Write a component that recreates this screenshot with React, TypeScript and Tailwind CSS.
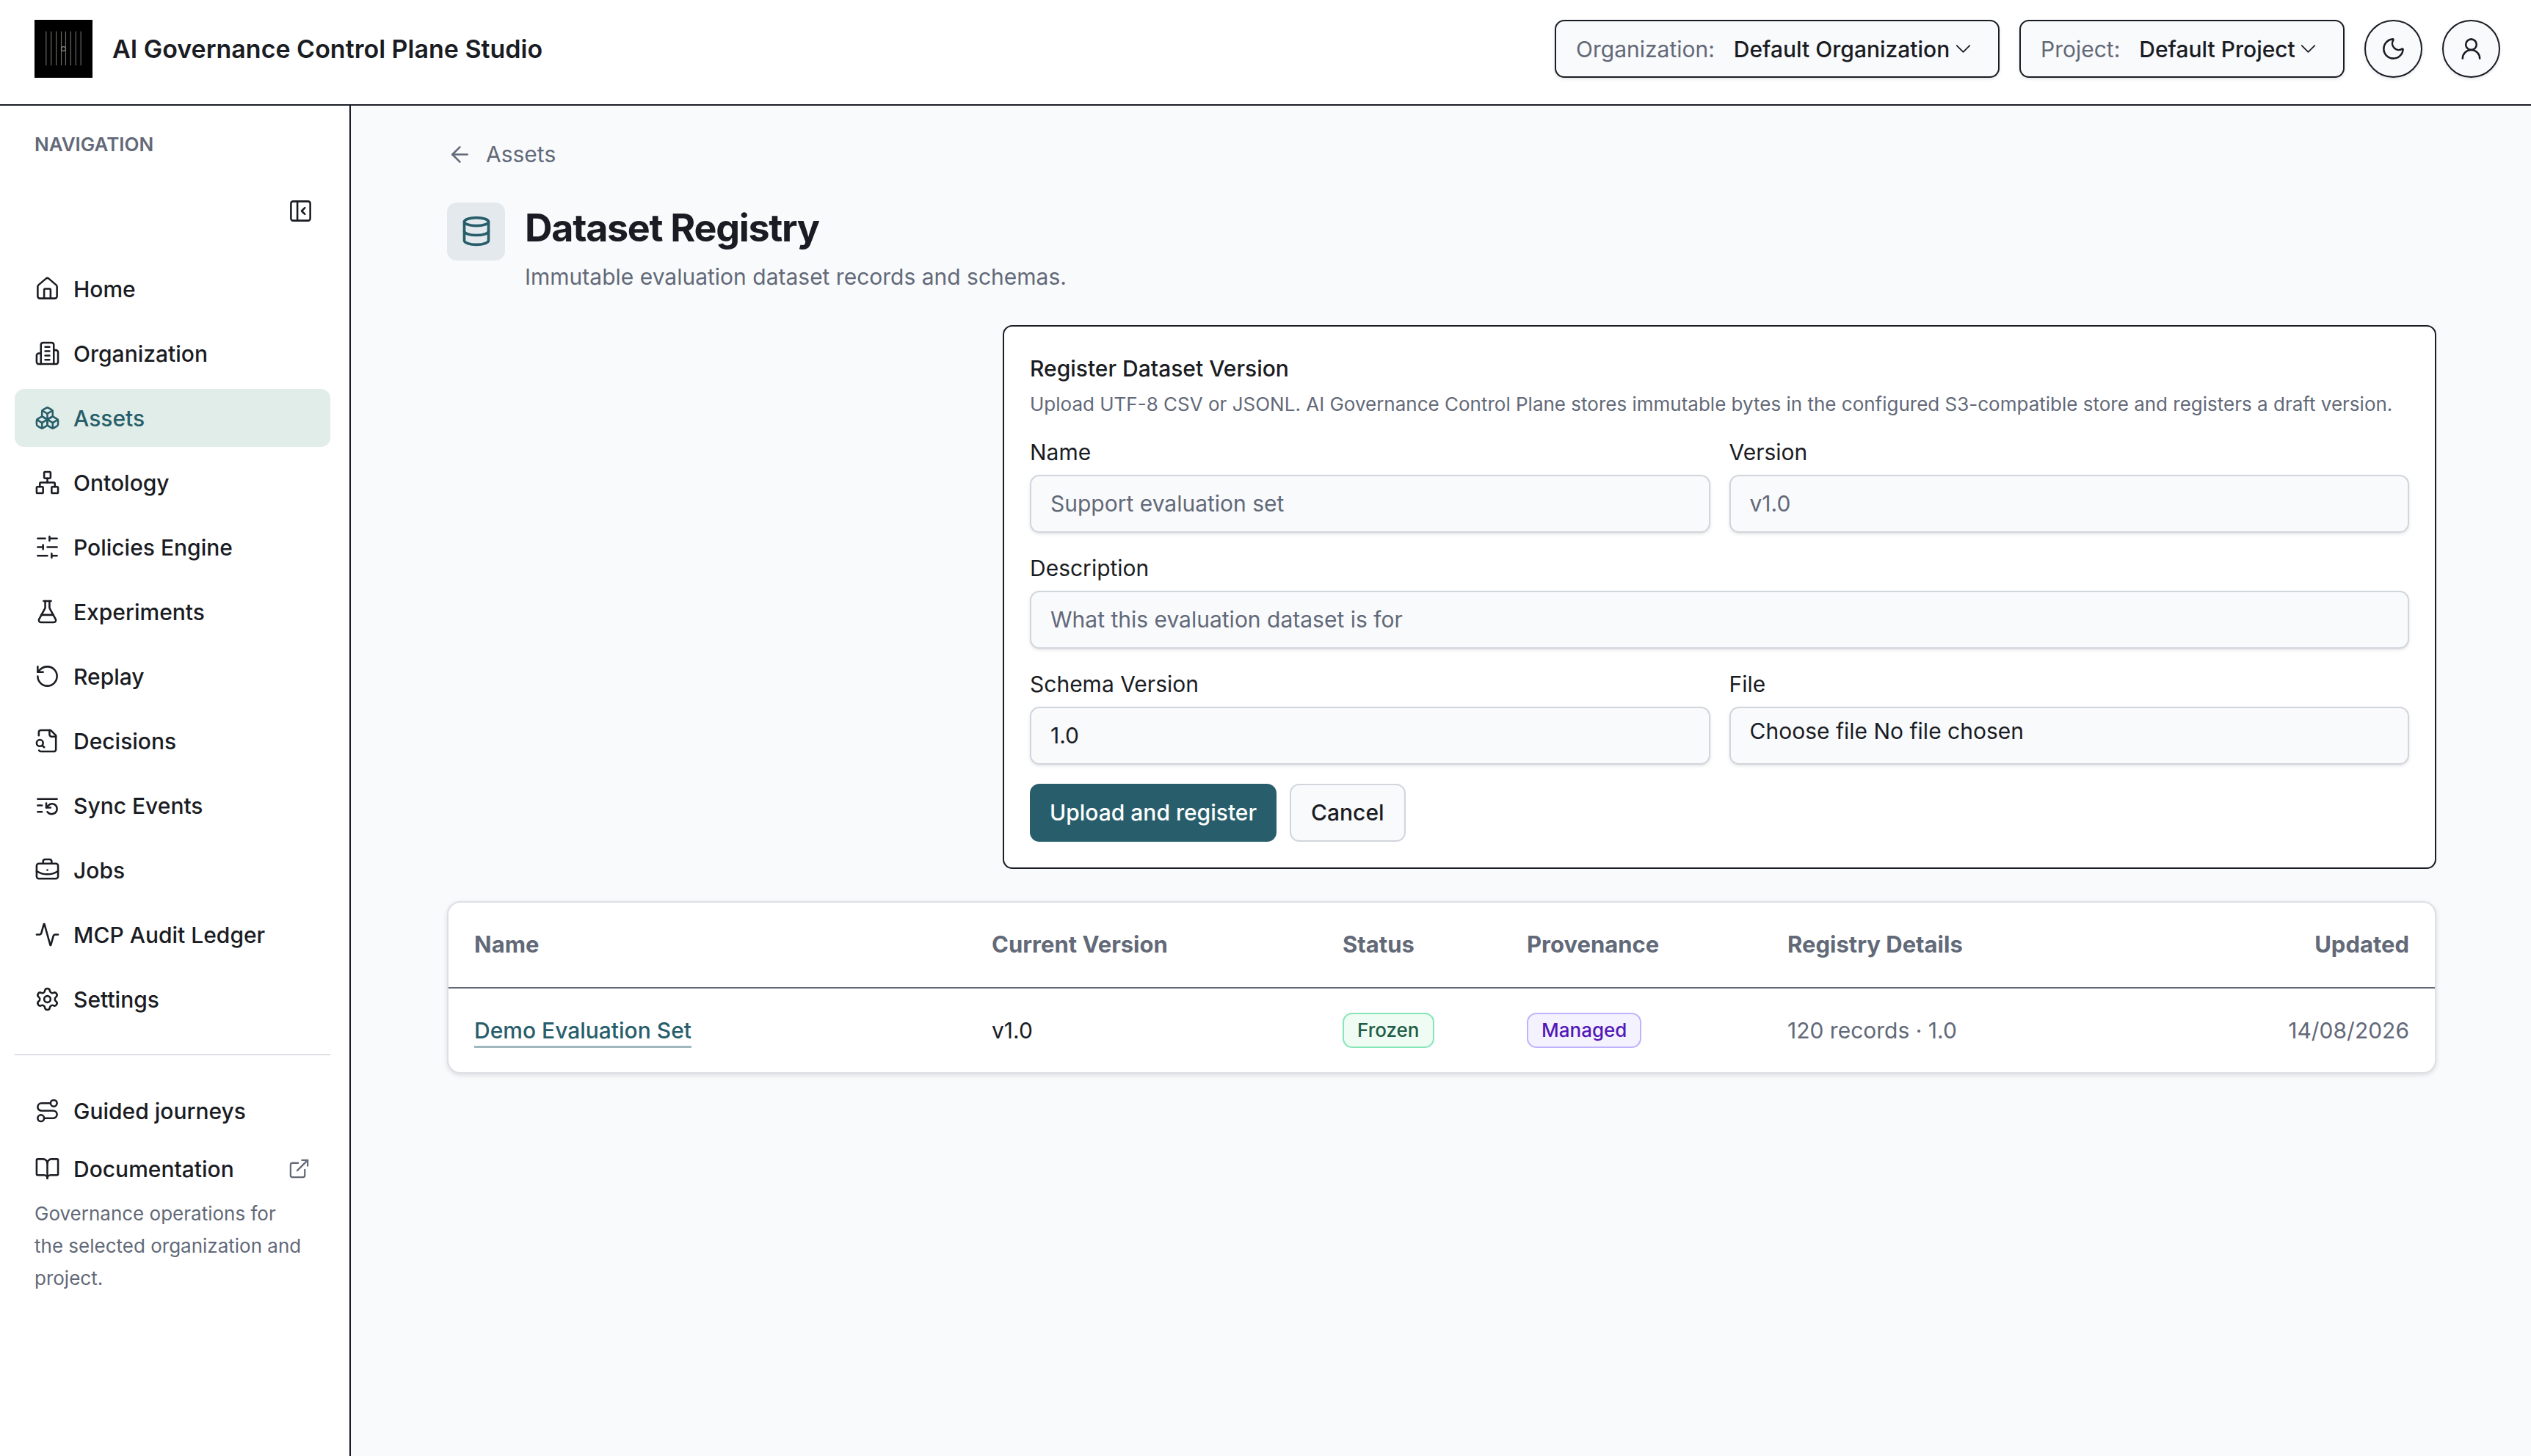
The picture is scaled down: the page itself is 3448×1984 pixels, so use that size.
import type React from "react"
import { useState } from "react"
import {
  Activity,
  ArrowLeft,
  BookOpen,
  Boxes,
  BriefcaseBusiness,
  ChevronDown,
  Database,
  ExternalLink,
  FlaskConical,
  House,
  Moon,
  Network,
  PanelLeftClose,
  RotateCcw,
  Route,
  Settings,
  UserRound,
} from "lucide-react"
import { clsx } from "clsx"

type IconType = React.ComponentType<{ className?: string; strokeWidth?: number }>

interface NavItem {
  label: string
  icon: IconType
  active?: boolean
}

interface Dataset {
  name: string
  version: string
  status: string
  provenance: string
  details: string
  updated: string
}

function outlineIcon(children: React.ReactNode): IconType {
  return function Icon({ className, strokeWidth = 2 }) {
    return (
      <svg
        className={className}
        viewBox="0 0 24 24"
        fill="none"
        stroke="currentColor"
        strokeWidth={strokeWidth}
        strokeLinecap="round"
        strokeLinejoin="round"
        aria-hidden="true"
      >
        {children}
      </svg>
    )
  }
}

const BuildingIcon = outlineIcon(
  <>
    <path d="M6 22V4a2 2 0 0 1 2-2h8a2 2 0 0 1 2 2v18Z" />
    <path d="M6 12H4a2 2 0 0 0-2 2v6a2 2 0 0 0 2 2h2" />
    <path d="M18 9h2a2 2 0 0 1 2 2v9a2 2 0 0 1-2 2h-2" />
    <path d="M10 6h4M10 10h4M10 14h4M10 18h4" />
  </>,
)

const SlidersIcon = outlineIcon(
  <path d="M21 4h-7M10 4H3M21 12h-9M8 12H3M21 20h-5M12 20H3M14 2v4M8 10v4M16 18v4" />,
)

const FileSearchIcon = outlineIcon(
  <>
    <path d="M14 2v4a2 2 0 0 0 2 2h4" />
    <path d="M4.268 21a2 2 0 0 0 1.727 1H18a2 2 0 0 0 2-2V7l-5-5H6a2 2 0 0 0-2 2v3" />
    <path d="m9 18-1.5-1.5" />
    <circle cx="5" cy="14" r="3" />
  </>,
)

const ListRestartIcon = outlineIcon(
  <>
    <path d="M21 6H3M7 12H3M7 18H3" />
    <path d="M12 18a5 5 0 0 0 9-3 4.5 4.5 0 0 0-4.5-4.5c-1.33 0-2.54.54-3.41 1.41L11 14" />
    <path d="M11 10v4h4" />
  </>,
)

const navItems: NavItem[] = [
  { label: "Home", icon: House },
  { label: "Organization", icon: BuildingIcon },
  { label: "Assets", icon: Boxes, active: true },
  { label: "Ontology", icon: Network },
  { label: "Policies Engine", icon: SlidersIcon },
  { label: "Experiments", icon: FlaskConical },
  { label: "Replay", icon: RotateCcw },
  { label: "Decisions", icon: FileSearchIcon },
  { label: "Sync Events", icon: ListRestartIcon },
  { label: "Jobs", icon: BriefcaseBusiness },
  { label: "MCP Audit Ledger", icon: Activity },
  { label: "Settings", icon: Settings },
]

const datasets: Dataset[] = [
  {
    name: "Demo Evaluation Set",
    version: "v1.0",
    status: "Frozen",
    provenance: "Managed",
    details: "120 records · 1.0",
    updated: "14/08/2026",
  },
]

function Logo() {
  const bars = [16, 23, 30, 37, 43, 50, 57, 64]
  return (
    <svg className="size-[79px] shrink-0" viewBox="0 0 80 80" aria-hidden="true">
      <rect width="80" height="80" fill="#000" />
      {bars.map((x) => (
        <path key={x} d={`M${x} 16v47`} stroke="#6b6a68" strokeWidth="1.2" />
      ))}
      <circle cx="40" cy="40" r="3" fill="#000" stroke="#93897a" strokeWidth="1.2" />
    </svg>
  )
}

function ScopeSelect({ id, label, value, className }: { id: string; label: string; value: string; className?: string }) {
  return (
    <div
      className={clsx(
        "flex h-[79px] items-center rounded-[13px] border-2 border-[#1a1d24] bg-[#f9fafc] pl-[27px] shadow-[0_2px_4px_rgba(0,0,0,0.1)]",
        className,
      )}
    >
      <label htmlFor={id} className="mr-[26px] text-[#626978]">
        {label}
      </label>
      <select id={id} className="appearance-none bg-transparent font-medium">
        <option>{value}</option>
      </select>
      <ChevronDown className="size-[35px]" strokeWidth={1.25} />
    </div>
  )
}

function RoundButton({ label, icon: Icon }: { label: string; icon: IconType }) {
  return (
    <button
      type="button"
      aria-label={label}
      className="flex size-[79px] items-center justify-center rounded-full border-2 border-[#1a1d24] bg-[#f9fafc] shadow-[0_2px_4px_rgba(0,0,0,0.1)]"
    >
      <Icon className="size-[35px]" strokeWidth={1.75} />
    </button>
  )
}

function Header() {
  return (
    <header className="flex items-center justify-between border-b-2 border-[#1a1d24] bg-white pt-[27px] pr-[42px] pb-[36px] pl-[47px]">
      <div className="flex items-center gap-[27px]">
        <Logo />
        <span className="text-[34px] leading-[44px] font-semibold">AI Governance Control Plane Studio</span>
      </div>
      <div className="flex items-center gap-[27px]">
        <ScopeSelect id="organization" label="Organization:" value="Default Organization" className="w-[606px]" />
        <ScopeSelect id="project" label="Project:" value="Default Project" className="w-[443px]" />
        <RoundButton label="Toggle theme" icon={Moon} />
        <RoundButton label="Account" icon={UserRound} />
      </div>
    </header>
  )
}

function NavLink({ item, children }: { item: NavItem; children?: React.ReactNode }) {
  const Icon = item.icon
  return (
    <a
      href="#"
      aria-current={item.active ? "page" : undefined}
      className={clsx(
        "flex h-[79px] items-center gap-[18px] rounded-[13px] px-[27px] font-medium",
        item.active && "bg-[#e0ede8] text-[#285e6b]",
      )}
    >
      <Icon className="size-[35px] shrink-0" strokeWidth={1.75} />
      {item.label}
      {children}
    </a>
  )
}

function Sidebar() {
  return (
    <aside className="w-[478px] shrink-0 border-r-2 border-[#1a1d24] bg-white pt-[31px] pr-[26px] pl-[20px]">
      <h2 className="px-[27px] text-[26px] leading-[44px] font-semibold text-[#626978]">NAVIGATION</h2>
      <div className="mt-[29px] mb-[27px] flex justify-end">
        <button type="button" aria-label="Collapse navigation" className="flex h-[79px] w-[81px] items-center justify-center">
          <PanelLeftClose className="size-[35px]" strokeWidth={1.75} />
        </button>
      </div>
      <nav className="flex flex-col gap-[9px]">
        {navItems.map((item) => (
          <NavLink key={item.label} item={item} />
        ))}
      </nav>
      <div className="mt-[35px] border-t-2 border-[#dddfe4] pt-[36px]">
        <NavLink item={{ label: "Guided journeys", icon: Route }} />
        <NavLink item={{ label: "Documentation", icon: BookOpen }}>
          <ExternalLink className="ml-auto size-[31px] text-[#626978]" strokeWidth={1.75} />
        </NavLink>
        <p className="pr-[35px] pl-[27px] text-[26px] leading-[44px] text-[#626978]">
          Governance operations for the selected organization and project.
        </p>
      </div>
    </aside>
  )
}

const fieldBox =
  "h-[79px] w-full rounded-[13px] border-2 border-[#d1d5dc] bg-[#f9fafc] px-[26px] shadow-[0_2px_4px_rgba(0,0,0,0.1)]"

interface FieldProps extends React.InputHTMLAttributes<HTMLInputElement> {
  id: string
  label: string
  wrapperClassName?: string
}

function Field({ id, label, wrapperClassName, ...props }: FieldProps) {
  return (
    <div className={clsx("flex flex-col gap-[9px]", wrapperClassName)}>
      <label htmlFor={id}>{label}</label>
      <input id={id} className={clsx(fieldBox, "placeholder:text-[#626978]")} {...props} />
    </div>
  )
}

function FileField({ id, label }: { id: string; label: string }) {
  const [fileName, setFileName] = useState("No file chosen")

  return (
    <div className="relative flex flex-col gap-[9px]">
      <label htmlFor={id}>{label}</label>
      <input
        id={id}
        type="file"
        accept=".csv,.jsonl"
        className="sr-only"
        onChange={(e) => setFileName(e.target.files?.[0]?.name ?? "No file chosen")}
      />
      <label htmlFor={id} className={clsx(fieldBox, "pt-[9px]")}>
        Choose file {fileName}
      </label>
    </div>
  )
}

function RegisterForm() {
  return (
    <form className="ml-auto w-full max-w-[1953px] rounded-[13px] border-2 border-[#1a1d24] bg-white p-[35px]">
      <h2 className="font-medium">Register Dataset Version</h2>
      <p className="mt-[9px] text-[26px] leading-[35px] text-[#626978]">
        Upload UTF-8 CSV or JSONL. AI Governance Control Plane stores immutable bytes in the configured S3-compatible
        store and registers a draft version.
      </p>
      <div className="mt-[26px] grid grid-cols-2 gap-[26px]">
        <Field id="name" label="Name" placeholder="Support evaluation set" />
        <Field id="version" label="Version" placeholder="v1.0" />
        <Field
          id="description"
          label="Description"
          placeholder="What this evaluation dataset is for"
          wrapperClassName="col-span-2"
        />
        <Field id="schema" label="Schema Version" defaultValue="1.0" />
        <FileField id="file" label="File" />
      </div>
      <div className="mt-[26px] flex gap-[18px]">
        <button type="submit" className="h-[79px] rounded-[13px] bg-[#285e6b] px-[27px] font-medium text-white">
          Upload and register
        </button>
        <button type="button" className="h-[79px] rounded-[13px] border-2 border-[#d1d5dc] bg-[#f9fafc] px-[27px] font-medium">
          Cancel
        </button>
      </div>
    </form>
  )
}

function Badge({ tone, children }: { tone: "green" | "violet"; children: React.ReactNode }) {
  return (
    <span
      className={clsx(
        "inline-flex h-[48px] items-center rounded-[13px] border-2 px-[18px] text-[26px] font-medium",
        tone === "green" && "border-[#86e6b8] bg-[#effcf4] text-[#235c45]",
        tone === "violet" && "border-[#bfb3fb] bg-[#f4f2fe] text-[#5318b8]",
      )}
    >
      {children}
    </span>
  )
}

function DatasetTable() {
  return (
    <div className="mt-[44px] overflow-hidden rounded-[18px] border-2 border-[#dddfe4] bg-white shadow-[0_2px_6px_rgba(0,0,0,0.12)]">
      <table className="w-full table-fixed text-left">
        <thead className="text-[31px] text-[#626978]">
          <tr className="h-[116px] border-b-2 border-[#626678]">
            <th className="w-[705px] px-[35px] font-bold">Name</th>
            <th className="w-[478px] px-[35px] font-bold">Current Version</th>
            <th className="w-[251px] px-[35px] font-bold">Status</th>
            <th className="w-[355px] px-[35px] font-bold">Provenance</th>
            <th className="px-[35px] font-bold">Registry Details</th>
            <th className="px-[35px] text-right font-bold">Updated</th>
          </tr>
        </thead>
        <tbody>
          {datasets.map((row) => (
            <tr key={row.name} className="h-[115px]">
              <td className="px-[35px]">
                <a
                  href="#"
                  className="font-medium text-[#285e6b] underline decoration-[#a0b8bd] decoration-[3px] underline-offset-[10px]"
                >
                  {row.name}
                </a>
              </td>
              <td className="px-[35px]">{row.version}</td>
              <td className="px-[35px]">
                <Badge tone="green">{row.status}</Badge>
              </td>
              <td className="px-[35px]">
                <Badge tone="violet">{row.provenance}</Badge>
              </td>
              <td className="px-[35px] text-[#626978]">{row.details}</td>
              <td className="px-[35px] text-right text-[#626978]">{row.updated}</td>
            </tr>
          ))}
        </tbody>
      </table>
    </div>
  )
}

export default function App() {
  return (
    <div className="flex min-h-screen flex-col bg-[#f9fafc] font-['Inter',sans-serif] text-[30px] leading-[44px] text-[#1a1c23]">
      <Header />
      <div className="flex flex-1">
        <Sidebar />
        <main className="flex-1 pt-[44px] pr-[129px] pl-[131px]">
          <a href="#" className="inline-flex items-center gap-[18px] text-[#626978]">
            <ArrowLeft className="size-[35px]" strokeWidth={1.75} />
            Assets
          </a>
          <div className="mt-[37px] flex gap-[27px]">
            <div className="flex size-[79px] shrink-0 items-center justify-center rounded-[13px] bg-[#e4e9ed] text-[#285e6b]">
              <Database className="size-[44px]" strokeWidth={2} />
            </div>
            <div>
              <h1 className="text-[52px] leading-[70px] font-bold tracking-tight">Dataset Registry</h1>
              <p className="mt-[9px] text-[#626978]">Immutable evaluation dataset records and schemas.</p>
            </div>
          </div>
          <div className="mt-[44px]">
            <RegisterForm />
            <DatasetTable />
          </div>
        </main>
      </div>
    </div>
  )
}
